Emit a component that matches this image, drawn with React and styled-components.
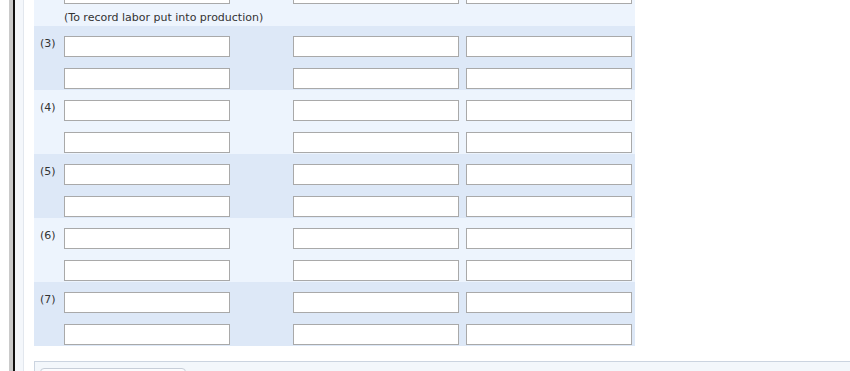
import React from 'react';
import styled, { createGlobalStyle } from 'styled-components';

const GlobalStyle = createGlobalStyle`
  html, body {
    margin: 0;
    padding: 0;
    background: #ffffff;
    overflow: hidden;
  }
  body {
    font-family: "DejaVu Sans", Verdana, sans-serif;
  }
`;

const Frame = styled.div`
  display: flex;
  height: 100vh;
  padding-left: 9px;
  background: #ffffff;
`;

const Rail = styled.div`
  display: flex;
  flex: 1;
  border-left: 4px solid #cacaca;
`;

const Shell = styled.div`
  display: flex;
  flex: 1;
  border-left: 2px solid #111111;
  background: #f4f7fb;
  padding-left: 8px;
`;

const Panel = styled.div`
  flex: 1;
  min-width: 0;
  overflow: hidden;
  background: #ffffff;
  border-left: 1px solid #e2e7ee;
  padding-left: 10px;
`;

const Journal = styled.div`
  width: 601px;
  margin-top: -59px;
  display: flex;
  flex-direction: column;
`;

const Entry = styled.div`
  background: ${({ $tone }) => ($tone === 'dark' ? '#dde8f7' : '#edf4fd')};
`;

const Lines = styled.div`
  display: grid;
  grid-template-columns: 30px 229px 173px 166px;
  grid-auto-rows: 21px;
  row-gap: 11px;
  padding: 10px 3px 1px 0;
`;

const Label = styled.div`
  grid-column: 1;
  grid-row: 1;
  padding: 1px 0 0 6px;
  font-size: 11px;
  line-height: 13px;
  color: #333333;
`;

const Field = styled.input`
  display: block;
  grid-column: ${({ $col }) => $col};
  grid-row: ${({ $line }) => $line};
  width: 166px;
  height: 21px;
  box-sizing: border-box;
  margin: 0;
  padding: 0 3px;
  border: 1px solid #a9a9a9;
  background: #ffffff;
  outline: none;
  font: inherit;
  font-size: 11px;
`;

const Note = styled.div`
  height: 21px;
  box-sizing: border-box;
  padding: 6px 0 0 30px;
  font-size: 11px;
  line-height: 13px;
  color: #333333;
  white-space: nowrap;
`;

const Footer = styled.div`
  margin-top: 15px;
  height: 40px;
  border: 1px solid #cbd4e0;
  border-right: none;
  background: #f3f7fb;
  padding: 6px 0 0 5px;
`;

const TabButton = styled.div`
  width: 146px;
  height: 28px;
  box-sizing: border-box;
  border: 1px solid #c7ced8;
  border-radius: 4px;
  background: #fbfcfe;
`;

const entries = [
  { num: 2, tone: 'light', note: '(To record labor put into production)', hideLabel: true },
  { num: 3, tone: 'dark' },
  { num: 4, tone: 'light' },
  { num: 5, tone: 'dark' },
  { num: 6, tone: 'light' },
  { num: 7, tone: 'dark' },
];

function JournalEntry({ num, tone, note, hideLabel }) {
  return (
    <Entry $tone={tone}>
      <Lines>
        {!hideLabel && <Label>({num})</Label>}
        {[1, 2].map((line) => (
          <React.Fragment key={line}>
            <Field $col={2} $line={line} type="text" aria-label={`account ${num}-${line}`} />
            <Field $col={3} $line={line} type="text" aria-label={`debit ${num}-${line}`} />
            <Field $col={4} $line={line} type="text" aria-label={`credit ${num}-${line}`} />
          </React.Fragment>
        ))}
      </Lines>
      {note && <Note>{note}</Note>}
    </Entry>
  );
}

export default function App() {
  return (
    <>
      <GlobalStyle />
      <Frame>
        <Rail>
          <Shell>
            <Panel>
              <Journal>
                {entries.map((e) => (
                  <JournalEntry key={e.num} {...e} />
                ))}
              </Journal>
              <Footer>
                <TabButton />
              </Footer>
            </Panel>
          </Shell>
        </Rail>
      </Frame>
    </>
  );
}
